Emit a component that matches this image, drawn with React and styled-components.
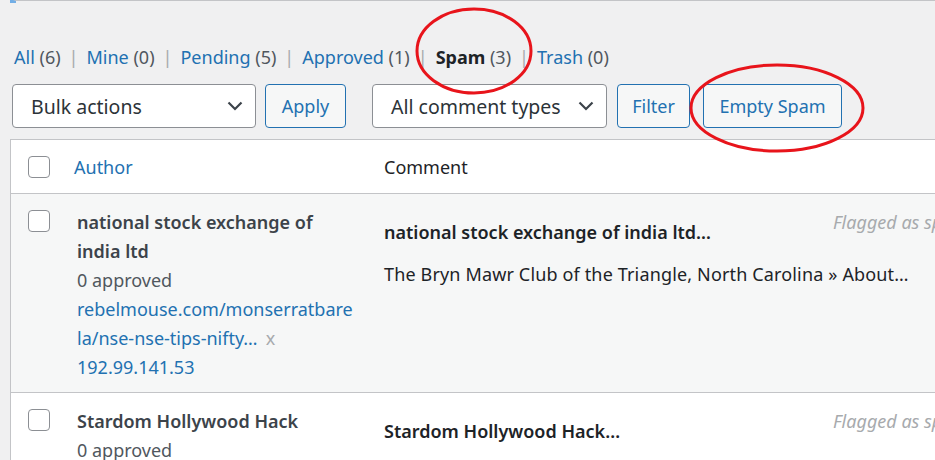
import styled, { createGlobalStyle } from 'styled-components';

const GlobalStyle = createGlobalStyle`
  html, body {
    margin: 0;
    padding: 0;
    background: #f0f0f1;
  }
  body {
    font-family: 'Noto Sans', 'Open Sans', sans-serif;
    font-size: 18px;
    color: #3c434a;
  }
`;

const Page = styled.div`
  position: relative;
  width: 935px;
  height: 460px;
  overflow: hidden;
  padding-left: 10px;
  box-sizing: border-box;
`;

const TopEdge = styled.div`
  height: 2px;
  border-top: 2px solid #c3c4c7;
  border-left: 6px solid #72aee6;
  margin-top: -1px;
`;

const Views = styled.ul`
  display: flex;
  align-items: center;
  list-style: none;
  margin: 40px 0 0;
  padding: 0 0 0 4px;
  height: 28px;
  line-height: 28px;
  white-space: nowrap;
`;

const ViewItem = styled.li`
  color: #2271b1;

  & + &::before {
    content: '|';
    color: #a7aaad;
    margin: 0 8px;
  }
`;

const ViewLabel = styled.span`
  color: ${(p) => (p.$current ? '#1d2327' : '#2271b1')};
  font-weight: ${(p) => (p.$current ? 700 : 400)};
`;

const Count = styled.span`
  color: #50575e;
`;

const Toolbar = styled.div`
  display: flex;
  align-items: center;
  margin-top: 13px;
  padding-left: 2px;
  height: 44px;
`;

const Select = styled.div`
  display: flex;
  align-items: center;
  justify-content: space-between;
  box-sizing: border-box;
  width: ${(p) => p.$width}px;
  height: 44px;
  padding: 0 12px 0 18px;
  margin-right: ${(p) => p.$gap}px;
  background: #fff;
  border: 1px solid #8c8f94;
  border-radius: 4px;
  color: #2c3338;
  font-size: 19.5px;
  white-space: nowrap;
`;

const Button = styled.div`
  display: flex;
  align-items: center;
  justify-content: center;
  box-sizing: border-box;
  width: ${(p) => p.$width}px;
  height: 44px;
  margin-right: ${(p) => p.$gap || 0}px;
  background: #f6f7f7;
  border: 1px solid #2271b1;
  border-radius: 4px;
  color: #2271b1;
  white-space: nowrap;
`;

const Table = styled.div`
  margin-top: 11px;
  border: 1px solid #c3c4c7;
  border-right: none;
  background: #fff;
`;

const Row = styled.div`
  display: grid;
  grid-template-columns: 63px 310px 1fr;
  background: ${(p) => (p.$alt ? '#f6f7f7' : '#fff')};
  border-top: ${(p) => (p.$first ? 'none' : '1px solid #c3c4c7')};
  line-height: 29px;
`;

const HeadRow = styled(Row)`
  height: 53px;
  align-items: center;
  padding-top: 1px;
  box-sizing: border-box;
`;

const CheckCell = styled.div`
  padding: ${(p) => (p.$head ? '0' : '16px')} 0 0 17px;
`;

const Checkbox = styled.div`
  width: 22px;
  height: 22px;
  box-sizing: border-box;
  border: 1px solid #8c8f94;
  border-radius: 4px;
  background: #fff;
`;

const HeadCell = styled.div`
  color: ${(p) => (p.$link ? '#2271b1' : '#1d2327')};
`;

const AuthorCell = styled.div`
  padding: 14px 29px 10px 3px;
`;

const AuthorName = styled.div`
  font-weight: 600;
  color: #3c434a;
`;

const Muted = styled.div`
  color: #50575e;
`;

const Link = styled.span`
  color: #2271b1;
  word-break: break-all;
`;

const Remove = styled.span`
  color: #a7aaad;
  margin-left: 8px;
`;

const CommentCell = styled.div`
  display: grid;
  grid-template-columns: 449px max-content;
  align-content: start;
  color: #1d2327;
  white-space: nowrap;
`;

const CommentTitle = styled.div`
  grid-column: 1;
  grid-row: 1;
  padding-top: 24px;
  font-weight: 600;
`;

const CommentText = styled.div`
  grid-column: 1 / -1;
  grid-row: 2;
  margin-top: 13px;
  letter-spacing: 0.15px;
`;

const Flagged = styled.div`
  grid-column: 2;
  grid-row: 1;
  padding-top: 14px;
  font-style: italic;
  color: #a7aaad;
`;

const Annotations = styled.svg`
  position: absolute;
  left: 0;
  top: 0;
  pointer-events: none;
`;

const Chevron = () => (
  <svg width="16" height="10" viewBox="0 0 16 10" fill="none">
    <path d="M1.5 1.5L8 8l6.5-6.5" stroke="#3c434a" strokeWidth="2.2" />
  </svg>
);

const views = [
  { label: 'All', count: 6 },
  { label: 'Mine', count: 0 },
  { label: 'Pending', count: 5 },
  { label: 'Approved', count: 1 },
  { label: 'Spam', count: 3, current: true },
  { label: 'Trash', count: 0 },
];

const comments = [
  {
    author: 'national stock exchange of india ltd',
    approved: '0 approved',
    url: 'rebelmouse.com/monserratbarela/nse-nse-tips-nifty…',
    ip: '192.99.141.53',
    title: 'national stock exchange of india ltd…',
    text: 'The Bryn Mawr Club of the Triangle, North Carolina » About…',
  },
  {
    author: 'Stardom Hollywood Hack',
    approved: '0 approved',
    title: 'Stardom Hollywood Hack…',
  },
];

export default function App() {
  return (
    <>
      <GlobalStyle />
      <Page>
        <TopEdge />
        <Views>
          {views.map((v) => (
            <ViewItem key={v.label}>
              <ViewLabel $current={v.current}>{v.label}</ViewLabel>{' '}
              <Count>({v.count})</Count>
            </ViewItem>
          ))}
        </Views>

        <Toolbar>
          <Select $width={244} $gap={9}>
            Bulk actions <Chevron />
          </Select>
          <Button $width={81} $gap={26}>Apply</Button>
          <Select $width={235} $gap={10}>
            All comment types <Chevron />
          </Select>
          <Button $width={73} $gap={13}>Filter</Button>
          <Button $width={139}>Empty Spam</Button>
        </Toolbar>

        <Table>
          <HeadRow $first>
            <CheckCell $head>
              <Checkbox />
            </CheckCell>
            <HeadCell $link>Author</HeadCell>
            <HeadCell>Comment</HeadCell>
          </HeadRow>
          {comments.map((c, i) => (
            <Row key={c.author} $alt={i % 2 === 0}>
              <CheckCell>
                <Checkbox />
              </CheckCell>
              <AuthorCell>
                <AuthorName>{c.author}</AuthorName>
                <Muted>{c.approved}</Muted>
                {c.url && (
                  <div>
                    <Link>{c.url}</Link>
                    <Remove>x</Remove>
                  </div>
                )}
                {c.ip && (
                  <div>
                    <Link>{c.ip}</Link>
                  </div>
                )}
              </AuthorCell>
              <CommentCell>
                <CommentTitle>{c.title}</CommentTitle>
                <Flagged>Flagged as spam by Akismet</Flagged>
                {c.text && <CommentText>{c.text}</CommentText>}
              </CommentCell>
            </Row>
          ))}
        </Table>

        <Annotations width="935" height="460" viewBox="0 0 935 460">
          <ellipse cx="474" cy="51" rx="57" ry="42" fill="none" stroke="#e8141b" strokeWidth="3" />
          <ellipse cx="777" cy="108" rx="86" ry="43" fill="none" stroke="#e8141b" strokeWidth="3" />
        </Annotations>
      </Page>
    </>
  );
}
